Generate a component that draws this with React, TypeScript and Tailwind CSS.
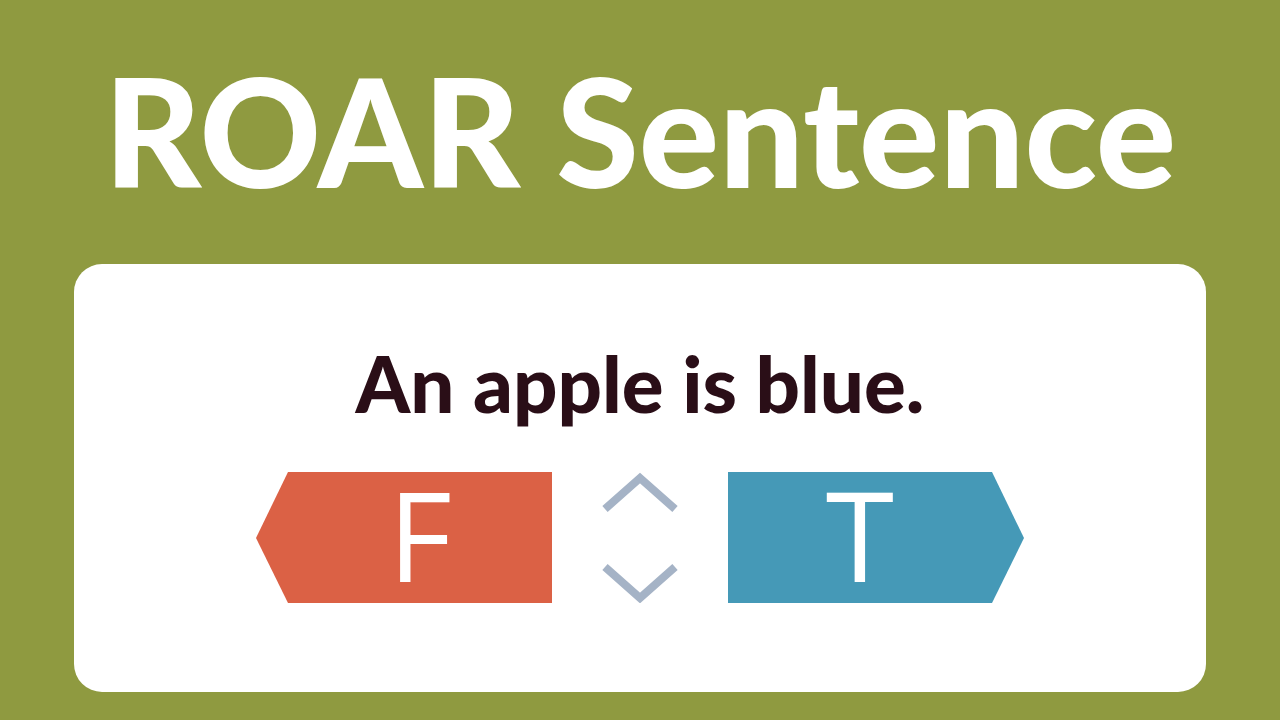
export default function App() {
  return (
    <div className="w-[1280px] h-[720px] bg-[#8f9a40] flex flex-col overflow-hidden" style={{ fontFamily: "Lato, 'Noto Sans', sans-serif" }}>
      <div className="h-[264px] flex items-center justify-center">
        <h1 className="text-white font-black text-[150px] leading-none tracking-[0px] mt-[-4px]">ROAR Sentence</h1>
      </div>
      <div className="mx-[74px] h-[428px] bg-white rounded-[28px] flex flex-col items-center">
        <p className="mt-[80px] text-[#2a0e17] font-black text-[78px] leading-none">An apple is blue.</p>
        <div className="mt-[50px] flex items-center">
          <div className="relative w-[296px] h-[131px]">
            <svg className="absolute inset-0" width="296" height="131" viewBox="0 0 296 131">
              <polygon points="32,0 296,0 296,131 32,131 0,66" fill="#db6145" />
            </svg>
            <span className="absolute inset-0 pl-[32px] pb-[8px] flex items-center justify-center text-white font-medium text-[124px] leading-none" style={{ fontFamily: "'Open Sans', sans-serif" }}>F</span>
          </div>
          <svg className="mx-[50px]" width="76" height="131" viewBox="0 0 76 131">
            <polyline points="3,37 38,6 73,37" fill="none" stroke="#a5b3c6" strokeWidth="8" />
            <polyline points="3,95 38,126 73,95" fill="none" stroke="#a5b3c6" strokeWidth="8" />
          </svg>
          <div className="relative w-[296px] h-[131px]">
            <svg className="absolute inset-0" width="296" height="131" viewBox="0 0 296 131">
              <polygon points="0,0 264,0 296,66 264,131 0,131" fill="#4599b7" />
            </svg>
            <span className="absolute inset-0 pr-[32px] pb-[8px] flex items-center justify-center text-white font-medium text-[124px] leading-none" style={{ fontFamily: "'Open Sans', sans-serif" }}>T</span>
          </div>
        </div>
      </div>
    </div>
  );
}
